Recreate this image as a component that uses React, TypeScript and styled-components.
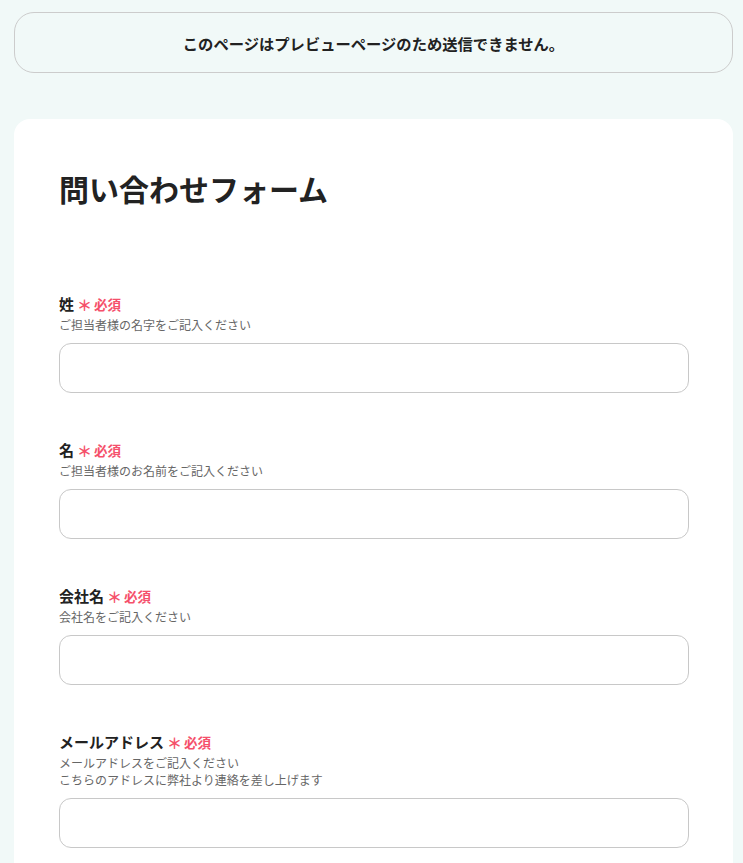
import React from "react";
import styled, { createGlobalStyle } from "styled-components";

const GlobalStyle = createGlobalStyle`
  html, body {
    margin: 0;
    padding: 0;
    background: #f1f9f8;
    font-family: "Noto Sans CJK JP", "Noto Sans", sans-serif;
    color: #222;
  }
`;

const Page = styled.div`
  padding: 12px 10px 0 14px;
  display: flex;
  flex-direction: column;
  gap: 46px;
`;

const Notice = styled.div`
  height: 59px;
  border: 1px solid #cccccc;
  border-radius: 20px;
  display: flex;
  align-items: center;
  justify-content: center;
  font-size: 15.3px;
  font-weight: 700;
  color: #222;
`;

const Card = styled.div`
  background: #ffffff;
  border-radius: 16px;
  padding: 47px 44px 40px 45px;
`;

const Title = styled.h1`
  margin: 0 0 82px;
  font-size: 30px;
  line-height: 44px;
  font-weight: 700;
  color: #222;
`;

const Fields = styled.div`
  display: flex;
  flex-direction: column;
  gap: 45px;
`;

const Field = styled.div`
  display: flex;
  flex-direction: column;
`;

const LabelRow = styled.label`
  display: flex;
  align-items: center;
  gap: 3px;
  font-size: 15px;
  line-height: 24px;
  font-weight: 700;
  color: #222;
`;

const Required = styled.span`
  display: inline-flex;
  align-items: center;
  gap: 2px;
  color: #f5506b;
  font-size: 13.5px;
  font-weight: 700;
`;

const Star = styled.span`
  font-size: 15px;
  font-weight: 700;
  line-height: 1;
`;

const Hint = styled.p`
  margin: 0;
  font-size: 12px;
  line-height: 17px;
  color: #666;
`;

const Input = styled.input`
  box-sizing: border-box;
  margin-top: 10px;
  width: 100%;
  height: 50px;
  border: 1px solid #c8c8c8;
  border-radius: 12px;
  background: #fff;
  padding: 0 14px;
  font-size: 15px;
  font-family: inherit;
  outline: none;
`;

type FieldDef = { label: string; hints: string[]; type?: string };

const fields: FieldDef[] = [
  { label: "姓", hints: ["ご担当者様の名字をご記入ください"] },
  { label: "名", hints: ["ご担当者様のお名前をご記入ください"] },
  { label: "会社名", hints: ["会社名をご記入ください"] },
  {
    label: "メールアドレス",
    hints: ["メールアドレスをご記入ください", "こちらのアドレスに弊社より連絡を差し上げます"],
    type: "email",
  },
];

export default function App() {
  return (
    <>
      <GlobalStyle />
      <Page>
        <Notice>このページはプレビューページのため送信できません。</Notice>
        <Card>
          <Title>問い合わせフォーム</Title>
          <Fields>
            {fields.map((f) => (
              <Field key={f.label}>
                <LabelRow>
                  {f.label}
                  <Required>
                    <Star>＊</Star>必須
                  </Required>
                </LabelRow>
                {f.hints.map((h) => (
                  <Hint key={h}>{h}</Hint>
                ))}
                <Input type={f.type ?? "text"} />
              </Field>
            ))}
          </Fields>
        </Card>
      </Page>
    </>
  );
}
